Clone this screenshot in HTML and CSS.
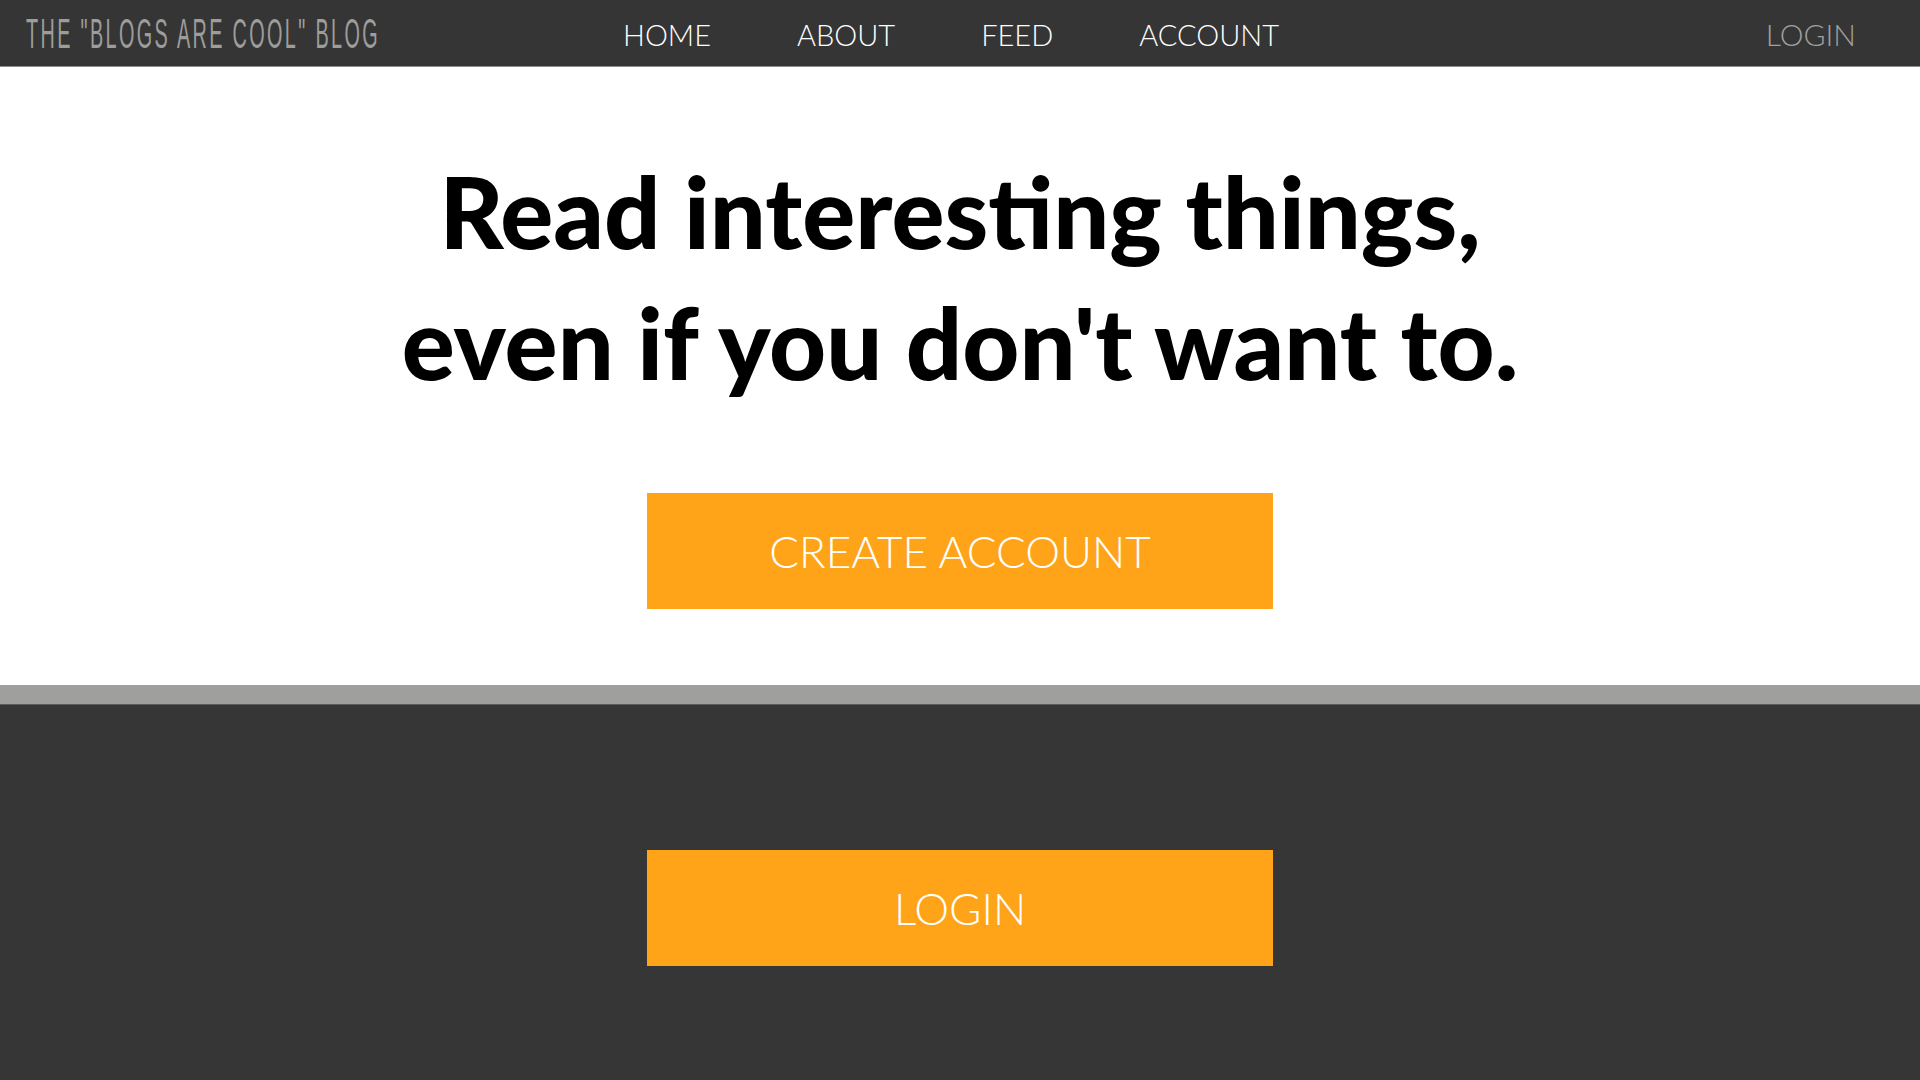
FILE: index.html
```html
<!DOCTYPE html>
<html lang="en">
<head>
<meta charset="utf-8">
<title>The "Blogs Are Cool" Blog</title>
<link rel="stylesheet" href="styles.css">
</head>
<body>
<header class="topbar">
  <div class="logo"><span class="logo-text">THE "BLOGS ARE COOL" BLOG</span></div>
  <nav class="links">
    <a class="link" href="#">HOME</a>
    <a class="link" href="#">ABOUT</a>
    <a class="link" href="#">FEED</a>
    <a class="link" href="#">ACCOUNT</a>
  </nav>
  <a class="login-link" href="#">LOGIN</a>
</header>
<main>
  <section class="hero">
    <h1 class="headline">Read interesting things,<br>even if you don't want to.</h1>
    <a class="btn" href="#">CREATE ACCOUNT</a>
  </section>
  <div class="divider"></div>
  <section class="dark">
    <a class="btn" href="#">LOGIN</a>
  </section>
</main>
</body>
</html>
```
FILE: styles.css
```css
* { box-sizing: border-box; }
html, body { margin: 0; padding: 0; }
body {
  width: 1920px;
  height: 1080px;
  overflow: hidden;
  background: #363636;
  font-family: Lato, "Liberation Sans", sans-serif;
}
a { text-decoration: none; }

.topbar {
  height: 67px;
  background: #353535;
  border-bottom: 1px solid #8c8c8c;
  display: flex;
  align-items: center;
  padding: 2px 64px 0 26px;
}
.logo {
  width: 597px;
  flex: none;
  height: 64px;
  display: flex;
  align-items: center;
}
.logo-text {
  display: inline-block;
  font-family: "Liberation Sans", sans-serif;
  font-size: 42px;
  color: #9d9d9b;
  letter-spacing: 5px;
  white-space: nowrap;
  transform: scaleX(0.472);
  transform-origin: left center;
}
.links {
  display: flex;
  gap: 86px;
}
.link {
  color: #ffffff;
  font-size: 29px;
  font-weight: 300;
}
.login-link {
  margin-left: auto;
  color: #a0a0a0;
  font-size: 30px;
  font-weight: 300;
}

.hero {
  background: #ffffff;
  height: 618px;
  display: flex;
  flex-direction: column;
  align-items: center;
  padding-top: 78px;
}
.headline {
  margin: 0 0 86px;
  font-family: Lato, sans-serif;
  font-weight: 900;
  font-size: 99px;
  line-height: 131px;
  color: #000000;
  text-align: center;
  letter-spacing: 0;
}
.btn {
  width: 626px;
  height: 116px;
  background: #ffa319;
  color: #ffffff;
  display: flex;
  align-items: center;
  justify-content: center;
  font-size: 44px;
  font-weight: 300;
}
.divider {
  height: 20px;
  background: #9f9f9d;
  border-bottom: 1px solid #5c5c5c;
}
.dark {
  background: #363636;
  height: 375px;
  display: flex;
  flex-direction: column;
  align-items: center;
  padding-top: 145px;
}
```
